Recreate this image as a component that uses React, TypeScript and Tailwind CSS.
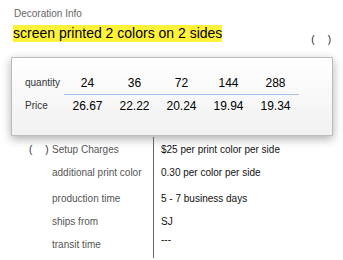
const quantities = ["24", "36", "72", "144", "288"];
const prices = ["26.67", "22.22", "20.24", "19.94", "19.34"];

const details = [
  { label: "Setup Charges", value: "$25 per print color per side", parens: true },
  { label: "additional print color", value: "0.30 per color per side" },
  { label: "production time", value: "5 - 7 business days" },
  { label: "ships from", value: "SJ" },
  { label: "transit time", value: "---" },
];

// top margin of each detail row (text rows are 14px tall)
const leftGaps = ["mt-[6px]", "mt-[9px]", "mt-[12px]", "mt-[9px]", "mt-[9px]"];
const rightGaps = ["mt-[6px]", "mt-[9px]", "mt-[12px]", "mt-[9px]", "mt-[4px]"];

const App = () => {
  return (
    <div className="w-[343px] h-[260px] overflow-hidden bg-white font-['Liberation_Sans',Arial,sans-serif]">
      {/* Header */}
      <div className="pl-[14px] pt-[8px] text-[10px] leading-[12px] text-[#666]">Decoration Info</div>
      <div className="flex items-start mt-[5px] pl-[13px] pr-[12px]">
        <span className="bg-[#fff23a] text-[14px] leading-[17px] text-black">
          screen printed 2 colors on 2 sides
        </span>
        <span className="ml-auto mt-[9px] text-[10px] leading-[12px] text-[#222]">
          (<span className="ml-[13px]">)</span>
        </span>
      </div>

      {/* Price table */}
      <div className="ml-[11px] mt-[11px] w-[322px] h-[79px] border border-[#bdbdbd] bg-linear-to-b from-white to-[#f1f1f1] shadow-[0_3px_9px_rgba(0,0,0,0.32)] pl-[13px] pt-[18px]">
        <div className="flex items-start">
          <div className="w-[39px] text-[10px] leading-[14px] text-[#333]">quantity</div>
          <div className="flex border-b border-[#a9bff0] pb-[4px]">
            {quantities.map((q) => (
              <div key={q} className="w-[47px] text-center text-[12px] leading-[14px] text-black">
                {q}
              </div>
            ))}
          </div>
        </div>
        <div className="flex items-start pt-[4px]">
          <div className="w-[39px] text-[10px] leading-[14px] text-[#333]">Price</div>
          <div className="flex">
            {prices.map((p) => (
              <div key={p} className="w-[47px] text-center text-[12px] leading-[14px] text-black">
                {p}
              </div>
            ))}
          </div>
        </div>
      </div>

      {/* Details */}
      <div className="flex mt-[1px] h-[121px] text-[10px] leading-[14px]">
        <div className="w-[153px] pl-[29px]">
          {details.map((d, i) => (
            <div key={d.label} className={`flex ${leftGaps[i]}`}>
              <div className="w-[23px] text-[#333]">
                {d.parens && (
                  <>
                    (<span className="ml-[13px]">)</span>
                  </>
                )}
              </div>
              <div className="text-[#555]">{d.label}</div>
            </div>
          ))}
        </div>
        <div className="flex-1 border-l border-[#666] pl-[7px]">
          {details.map((d, i) => (
            <div key={d.label} className={`${rightGaps[i]} text-[#111]`}>
              {d.value}
            </div>
          ))}
        </div>
      </div>
    </div>
  );
};

export default App;
